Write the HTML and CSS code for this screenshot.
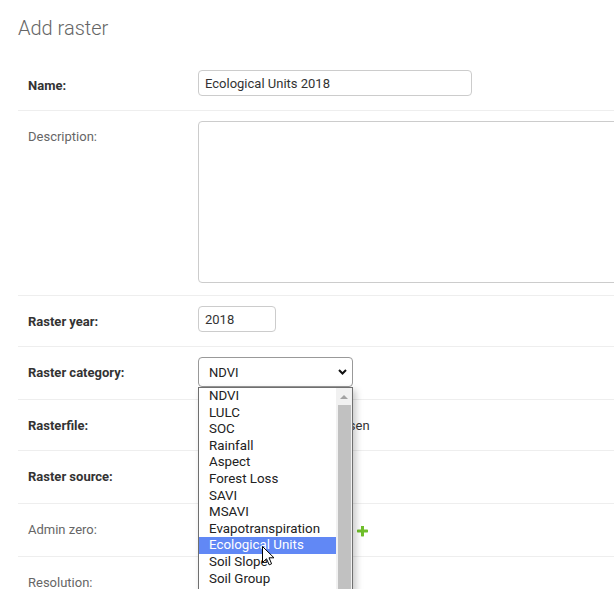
FILE: index.html
```html
<!DOCTYPE html>
<html lang="en">
<head>
<meta charset="utf-8">
<title>Add raster</title>
<link rel="stylesheet" href="styles.css">
</head>
<body>
<div class="content">
  <h1 class="title">Add raster</h1>
  <form class="raster-form">
    <fieldset class="module">
      <div class="form-row">
        <label class="required">Name:</label>
        <div class="field">
          <input class="text-input name-input" type="text" value="Ecological Units 2018">
        </div>
      </div>
      <div class="form-row">
        <label>Description:</label>
        <div class="field field-area">
          <textarea class="text-area"></textarea>
        </div>
      </div>
      <div class="form-row">
        <label class="required">Raster year:</label>
        <div class="field">
          <input class="text-input year-input" type="text" value="2018">
        </div>
      </div>
      <div class="form-row">
        <label class="required">Raster category:</label>
        <div class="field field-select">
          <div class="select-wrap">
            <div class="select focused">
              <span>NDVI</span>
              <svg class="chevron" width="9" height="6" viewBox="0 0 9 6"><path d="M1 1 L4.5 4.5 L8 1" fill="none" stroke="#111" stroke-width="2"/></svg>
            </div>
            <div class="dropdown">
              <ul class="options">
                <li class="option">NDVI</li>
                <li class="option">LULC</li>
                <li class="option">SOC</li>
                <li class="option">Rainfall</li>
                <li class="option">Aspect</li>
                <li class="option">Forest Loss</li>
                <li class="option">SAVI</li>
                <li class="option">MSAVI</li>
                <li class="option">Evapotranspiration</li>
                <li class="option active">Ecological Units</li>
                <li class="option">Soil Slope</li>
                <li class="option">Soil Group</li>
              </ul>
              <div class="scrollbar">
                <span class="scroll-up"></span>
                <span class="thumb"></span>
              </div>
              <svg class="cursor" width="13" height="20" viewBox="0 0 13 20"><path d="M0.5 0.5 L0.5 16.5 L4.5 12.8 L7.2 18.8 L9.6 17.8 L7 11.8 L12 11.8 Z" fill="#fff" stroke="#000" stroke-width="1" stroke-linejoin="round"/></svg>
            </div>
          </div>
        </div>
      </div>
      <div class="form-row">
        <label class="required">Rasterfile:</label>
        <div class="field">
          <div class="file-widget">
            <span class="file-button"></span>
            <span class="file-name">No file chosen</span>
          </div>
        </div>
      </div>
      <div class="form-row">
        <label class="required">Raster source:</label>
        <div class="field field-select">
          <div class="select"></div>
        </div>
      </div>
      <div class="form-row">
        <label>Admin zero:</label>
        <div class="field field-select">
          <div class="select"></div>
          <a class="add-link" href="#" title="Add another admin zero">
            <svg width="11" height="11" viewBox="192 192 1408 1408"><path fill="#70bf2b" d="M1600 736v192q0 40-28 68t-68 28h-416v416q0 40-28 68t-68 28h-192q-40 0-68-28t-28-68v-416h-416q-40 0-68-28t-28-68v-192q0-40 28-68t68-28h416v-416q0-40 28-68t68-28h192q40 0 68 28t28 68v416h416q40 0 68 28t28 68z"/></svg>
          </a>
        </div>
      </div>
      <div class="form-row">
        <label>Resolution:</label>
        <div class="field">
          <input class="text-input year-input" type="text" value="">
        </div>
      </div>
    </fieldset>
  </form>
</div>
</body>
</html>
```

FILE: styles.css
```css
html, body {
  margin: 0;
  padding: 0;
  overflow: hidden;
  background: #fff;
}

body {
  font-family: Roboto, "Liberation Sans", sans-serif;
  font-size: 13px;
  color: #333;
}

.content {
  padding: 16px 0 0 18px;
}

.title {
  margin: 0 0 20px;
  font-size: 20px;
  font-weight: 300;
  line-height: 24px;
  color: #666;
}

.raster-form {
  margin: 0;
}

.module {
  margin: 0;
  padding: 0;
  border: 0;
  min-width: 0;
}

.form-row {
  display: flex;
  align-items: flex-start;
  padding: 10px;
  border-bottom: 1px solid #eee;
}

.form-row > label {
  flex: 0 0 160px;
  padding: 8px 10px 0 0;
  line-height: 15px;
  color: #666;
}

.form-row > label.required {
  font-weight: 700;
  color: #333;
}

.field {
  flex: 1;
  min-width: 0;
  min-height: 30px;
  display: flex;
  align-items: flex-start;
}

.field-select {
  min-height: 32px;
}

.field-area {
  min-height: 164px;
}

.text-input {
  box-sizing: border-box;
  height: 26px;
  margin: 0;
  padding: 5px 6px;
  border: 1px solid #ccc;
  border-radius: 4px;
  font-family: Roboto, "Liberation Sans", sans-serif;
  font-size: 13px;
  color: #333;
  background: #fff;
  outline: none;
}

.name-input {
  width: 274px;
}

.year-input {
  width: 78px;
}

.text-area {
  box-sizing: border-box;
  flex: none;
  width: 610px;
  height: 162px;
  margin: 0;
  padding: 5px 6px;
  border: 1px solid #ccc;
  border-radius: 4px;
  resize: none;
  font-family: Roboto, "Liberation Sans", sans-serif;
  font-size: 13px;
  outline: none;
}

.select-wrap {
  position: relative;
}

.select {
  box-sizing: border-box;
  width: 155px;
  height: 30px;
  display: flex;
  align-items: center;
  justify-content: space-between;
  padding: 0 5px 0 10px;
  border: 1px solid #ccc;
  border-radius: 4px;
  font-size: 13px;
  color: #222;
  background: #fff;
}

.select.focused {
  border-color: #999;
}

.dropdown {
  position: absolute;
  left: 0;
  top: 100%;
  z-index: 10;
  box-sizing: border-box;
  width: 155px;
  height: 230px;
  display: flex;
  border: 1px solid #6f6f6f;
  background: #fff;
  box-shadow: 3px 3px 7px rgba(0, 0, 0, 0.22);
}

.options {
  flex: 1;
  margin: 0;
  padding: 0;
  list-style: none;
}

.option {
  padding: 0 0 1px 10px;
  line-height: 15.6px;
  font-size: 13.333px;
  color: #222;
  white-space: nowrap;
}

.option.active {
  background: #6188f5;
  color: #fff;
}

.scrollbar {
  flex: 0 0 16px;
  position: relative;
  background: #f1f1f1;
}

.scroll-up {
  position: absolute;
  top: 7px;
  left: 4px;
  width: 0;
  height: 0;
  border-left: 4px solid transparent;
  border-right: 4px solid transparent;
  border-bottom: 4px solid #a3a3a3;
}

.thumb {
  position: absolute;
  top: 17px;
  left: 2px;
  right: 1px;
  bottom: 0;
  background: #c1c1c1;
}

.cursor {
  position: absolute;
  left: 63px;
  top: 158px;
}

.file-widget {
  display: flex;
  align-items: center;
  height: 30px;
  gap: 5px;
  white-space: nowrap;
}

.file-button {
  box-sizing: border-box;
  width: 84px;
  height: 21px;
  border: 1px solid #767676;
  border-radius: 2px;
  background: #efefef;
}

.file-name {
  color: #333;
}

.add-link {
  align-self: center;
  display: flex;
  margin-left: 4px;
  margin-top: 2px;
}
```
